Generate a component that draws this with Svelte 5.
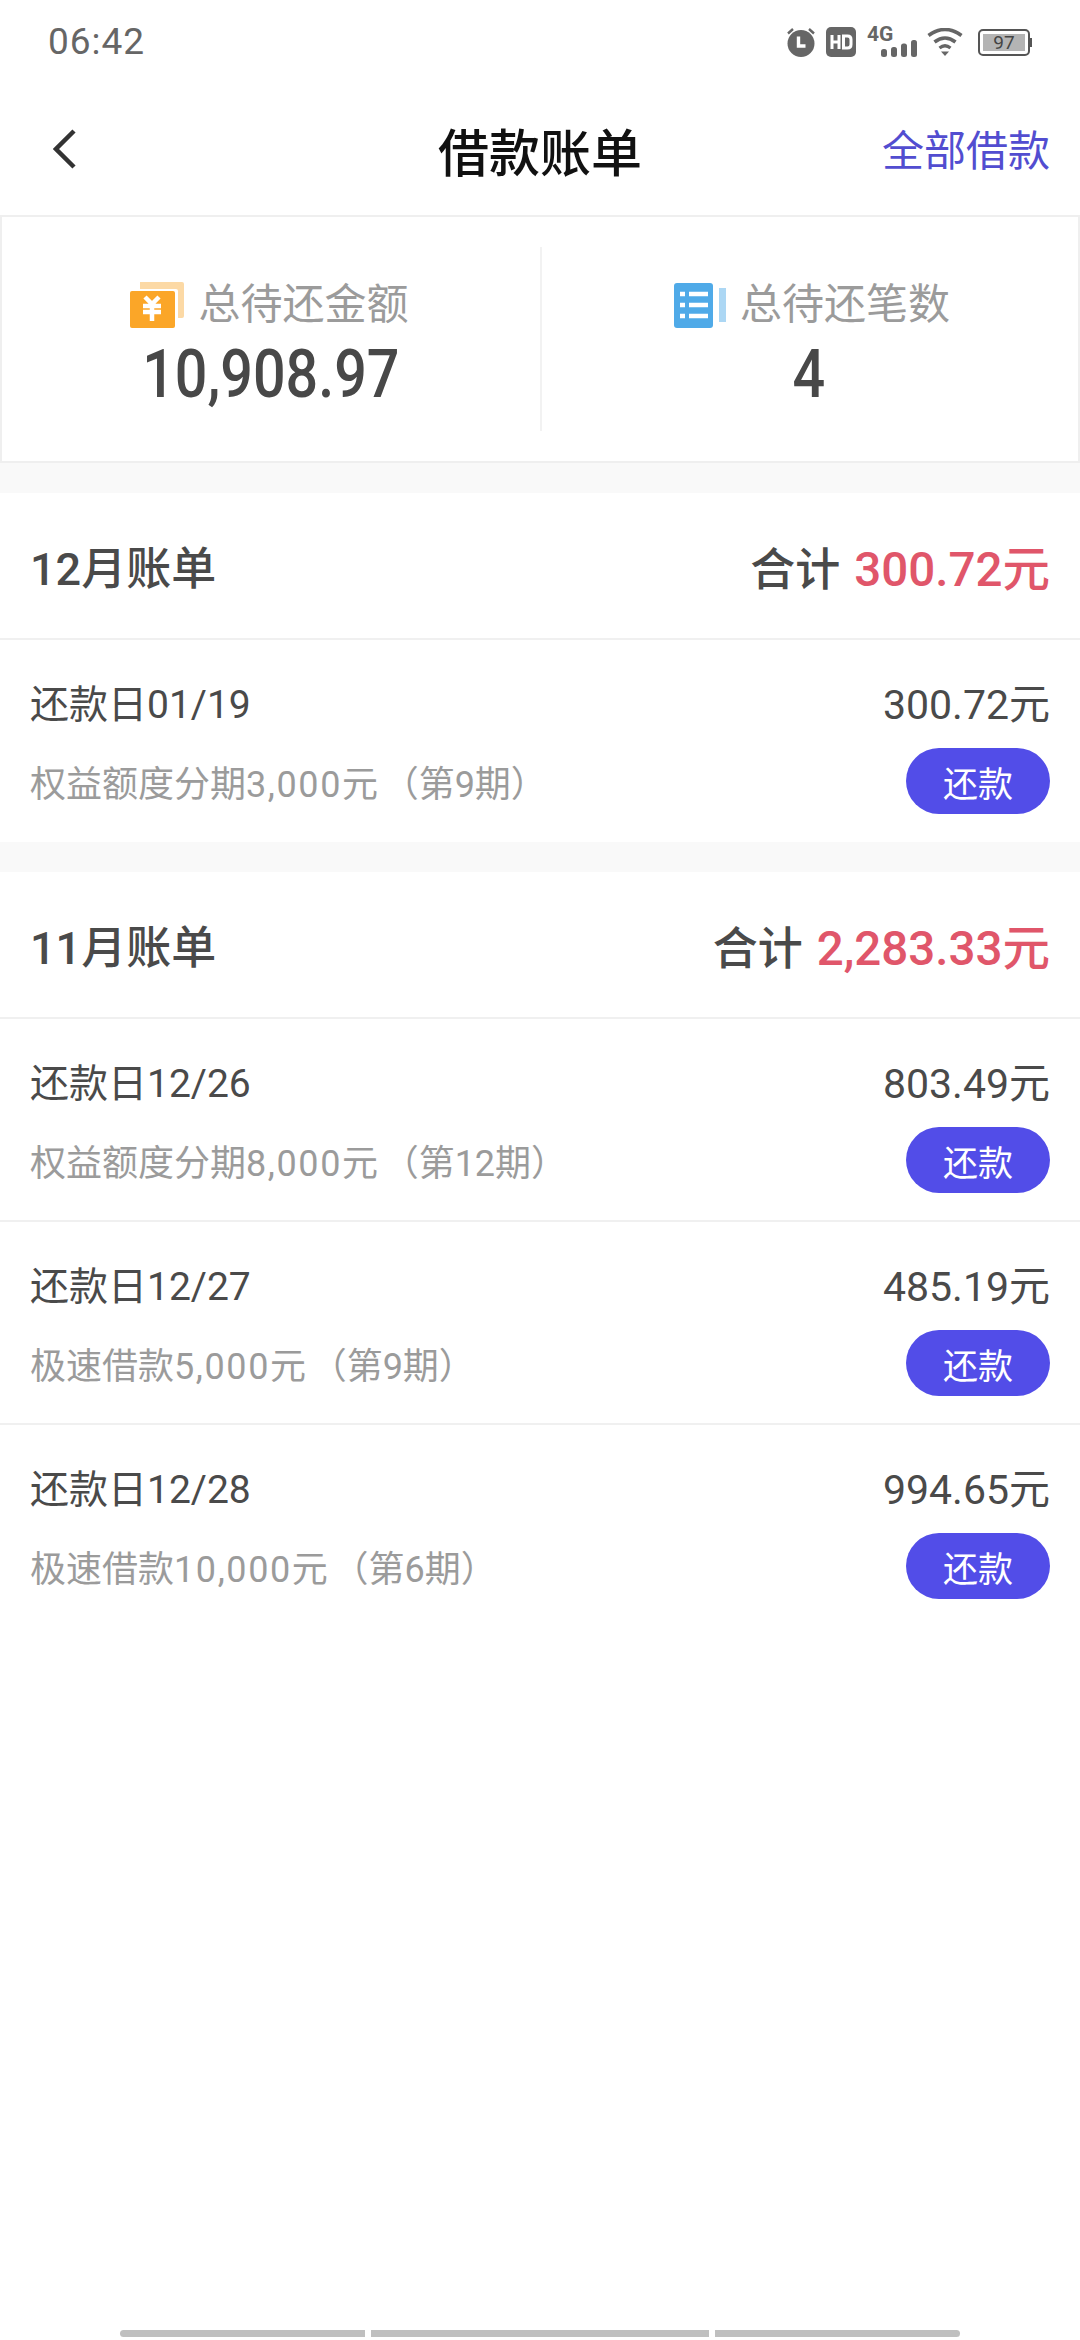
<script>
  const bills = [
    {
      month: "12月账单",
      total: "300.72元",
      items: [{ date: "还款日01/19", amount: "300.72元", name: "权益额度分期", money: "3,000元", term: "第9期" }],
    },
    {
      month: "11月账单",
      total: "2,283.33元",
      items: [
        { date: "还款日12/26", amount: "803.49元", name: "权益额度分期", money: "8,000元", term: "第12期" },
        { date: "还款日12/27", amount: "485.19元", name: "极速借款", money: "5,000元", term: "第9期" },
        { date: "还款日12/28", amount: "994.65元", name: "极速借款", money: "10,000元", term: "第6期" },
      ],
    },
  ];
</script>

<div class="page">
  <div class="status">
    <span class="time">06:42</span>
    <div class="status-icons">
      <svg width="30" height="30" viewBox="0 0 30 30">
        <circle cx="15" cy="16.5" r="13.5" fill="#666" />
        <path d="M2 6.5 7 2M28 6.5 23 2" stroke="#666" stroke-width="2.4" fill="none" />
        <path d="M12.5 9.5v9.5h7" stroke="#fff" stroke-width="3.4" fill="none" />
      </svg>
      <svg width="30" height="30" viewBox="0 0 30 30">
        <rect width="30" height="30" rx="5" fill="#666" />
        <path d="M6 8v14M13 8v14M6 15h7" stroke="#fff" stroke-width="3" fill="none" />
        <path d="M17.5 9h4q3.500 0 3.500 3.500v5q0 3.500-3.500 3.500h-4z" stroke="#fff" stroke-width="3" fill="none" />
      </svg>
      <div class="signal">
        <span class="net">4G</span>
        <svg width="36" height="17" viewBox="0 0 36 17">
          <rect x="0" y="9" width="6" height="8" rx="2.500" fill="#666" />
          <rect x="10" y="7" width="6" height="10" rx="2.500" fill="#666" />
          <rect x="20" y="3.500" width="6" height="13.500" rx="2.500" fill="#666" />
          <rect x="30" y="0" width="6" height="17" rx="2.500" fill="#666" />
        </svg>
      </div>
      <svg width="36" height="28" viewBox="0 0 36 28">
        <path d="M1.500 7.500Q18-4.500 34.500 7.500" stroke="#666" stroke-width="3.600" fill="none" />
        <path d="M7.500 14Q18 6 28.500 14" stroke="#666" stroke-width="3.600" fill="none" />
        <path d="M12.500 20Q18 15.500 23.500 20" stroke="#666" stroke-width="3.200" fill="none" />
        <path d="M14 23.500h8L18 28z" fill="#666" />
      </svg>
      <div class="battery">
        <div class="battery-body"><span>97</span></div>
        <div class="battery-tip"></div>
      </div>
    </div>
  </div>

  <header class="nav">
    <svg class="back" width="24" height="40" viewBox="0 0 24 40">
      <path d="M21 2 3 20l18 18" stroke="#333" stroke-width="4.500" fill="none" />
    </svg>
    <h1>借款账单</h1>
    <span class="all">全部借款</span>
  </header>

  <section class="summary">
    <div class="stat">
      <div class="stat-label">
        <svg width="54" height="46" viewBox="0 0 54 46">
          <path d="M10 0h42a2 2 0 0 1 2 2v32a2 2 0 0 1-2 2h-4V9a2 2 0 0 0-2-2H10z" fill="#fcd9a5" />
          <rect x="0" y="9" width="45" height="37" rx="2" fill="#fba628" />
          <path d="M15 15l7 7 7-7M13 24h18M13 30h18M22 22v17" stroke="#fff" stroke-width="4.500" fill="none" />
        </svg>
        <span>总待还金额</span>
      </div>
      <div class="stat-value">10,908.97</div>
    </div>
    <div class="stat">
      <div class="stat-label">
        <svg width="52" height="46" viewBox="0 0 52 46">
          <rect x="0" y="1" width="39" height="45" rx="3" fill="#4faae8" />
          <rect x="45" y="6" width="7" height="34" fill="#acd7f4" />
          <path d="M6 12h5M6 23h5M6 34h5M15 12h19M15 23h19M15 34h19" stroke="#fff" stroke-width="4.500" fill="none" />
        </svg>
        <span>总待还笔数</span>
      </div>
      <div class="stat-value">4</div>
    </div>
  </section>

  {#each bills as bill}
    <section class="bill">
      <div class="bill-head">
        <span class="month">{bill.month}</span>
        <span class="total">合计<em>{bill.total}</em></span>
      </div>
      {#each bill.items as item}
        <div class="row">
          <div class="row-top">
            <span class="date">{item.date}</span>
            <span class="amount">{item.amount}</span>
          </div>
          <div class="row-bottom">
            <span class="desc">{item.name}<span class="money">{item.money}</span><span class="term">（{item.term}）</span></span>
            <button>还款</button>
          </div>
        </div>
      {/each}
    </section>
  {/each}

  <div class="gesture">
    <i></i><i></i><i></i>
  </div>
</div>

<style>
  :global(body) {
    background: #fff;
  }

  .page {
    position: relative;
    width: 1080px;
    height: 2340px;
    overflow: hidden;
    background: #fff;
    font-family: Roboto, "Noto Sans CJK SC", sans-serif;
    color: #4a4a4a;
  }

  .status {
    height: 84px;
    box-sizing: border-box;
    padding: 21px 48px 0;
    display: flex;
    justify-content: space-between;
    align-items: flex-start;
  }

  .time {
    font-size: 37px;
    line-height: 42px;
    color: #666;
    letter-spacing: 1px;
  }

  .status-icons {
    display: flex;
    align-items: center;
    gap: 10px;
    padding-top: 6px;
  }

  .signal {
    width: 50px;
    margin-left: 1px;
    position: relative;
    height: 30px;
  }

  .net {
    position: absolute;
    left: 0;
    top: -4px;
    font-size: 21px;
    line-height: 22px;
    font-weight: 700;
    color: #666;
  }

  .signal svg {
    position: absolute;
    right: 0;
    bottom: 0;
  }

  .battery {
    display: flex;
    align-items: center;
    margin-left: 5px;
  }

  .battery-body {
    width: 52px;
    height: 27px;
    box-sizing: border-box;
    border: 2px solid #555;
    border-radius: 5px;
    padding: 3px;
  }

  .battery-body span {
    display: block;
    height: 17px;
    background: #b4b4b4;
    font-size: 19px;
    line-height: 17px;
    text-align: center;
    color: #444;
  }

  .battery-tip {
    width: 2px;
    height: 9px;
    background: #555;
  }

  .nav {
    height: 131px;
    position: relative;
    display: flex;
    align-items: center;
    justify-content: center;
    box-sizing: border-box;
  }

  .back {
    position: absolute;
    left: 53px;
    top: 45px;
  }

  h1 {
    margin: 0;
    font-size: 51px;
    font-weight: 500;
    color: #111;
  }

  .all {
    position: absolute;
    right: 30px;
    top: 40px;
    font-size: 42px;
    line-height: 56px;
    color: #524dd0;
  }

  .summary {
    height: 248px;
    box-sizing: border-box;
    border: 2px solid #efefef;
    display: grid;
    grid-template-columns: 1fr 1fr;
    align-items: center;
    position: relative;
  }

  .summary::after {
    content: "";
    position: absolute;
    left: 538px;
    top: 30px;
    bottom: 30px;
    width: 2px;
    background: #f2f2f2;
  }

  .stat {
    display: flex;
    flex-direction: column;
    align-items: center;
    padding-top: 5px;
  }

  .stat-label {
    display: flex;
    align-items: center;
    gap: 14px;
    font-size: 42px;
    line-height: 60px;
    color: #9b9b9b;
  }

  .stat:first-child .stat-label {
    margin-right: 3px;
  }

  .stat:last-child .stat-label {
    margin-left: 6px;
  }

  .stat-value {
    font-size: 66px;
    line-height: 66px;
    margin-top: 7px;
    font-weight: 500;
    color: #484848;
    transform: scaleX(0.87);
  }

  .bill {
    border-top: 30px solid #f9f9f9;
  }

  .bill-head {
    height: 147px;
    box-sizing: border-box;
    padding: 0 30px;
    display: flex;
    justify-content: space-between;
    align-items: center;
    border-bottom: 2px solid #f0f0f0;
    font-size: 45px;
    font-weight: 500;
  }

  .total em {
    font-style: normal;
    font-size: 47.5px;
    margin-left: 14px;
    color: #e0566a;
  }

  .row {
    height: 203px;
    box-sizing: border-box;
    padding: 0 30px;
    border-bottom: 2px solid #f0f0f0;
  }

  .row:last-child {
    border-bottom: none;
    height: 202px;
  }

  .row-top {
    display: flex;
    justify-content: space-between;
    padding-top: 40px;
    line-height: 50px;
  }

  .date {
    font-size: 39px;
  }

  .amount {
    font-size: 41px;
  }

  .row-bottom {
    display: flex;
    justify-content: space-between;
    align-items: center;
    margin-top: 18px;
  }

  .desc {
    font-size: 36px;
    color: #9b9b9b;
  }

  .money {
    letter-spacing: 1.6px;
  }

  .term {
    margin-left: 3px;
  }

  button {
    width: 144px;
    height: 66px;
    padding: 0;
    border: none;
    border-radius: 33px;
    background: #524de8;
    color: #fff;
    font: inherit;
    font-size: 35px;
  }

  .gesture {
    position: absolute;
    left: 120px;
    top: 2330px;
    display: flex;
    gap: 6px;
  }

  .gesture i {
    display: block;
    height: 7px;
    width: 245px;
    background: #bfbfbf;
  }

  .gesture i:nth-child(2) {
    width: 338px;
  }

  .gesture i:first-child {
    border-radius: 4px 0 0 4px;
  }

  .gesture i:last-child {
    border-radius: 0 4px 4px 0;
  }
</style>
